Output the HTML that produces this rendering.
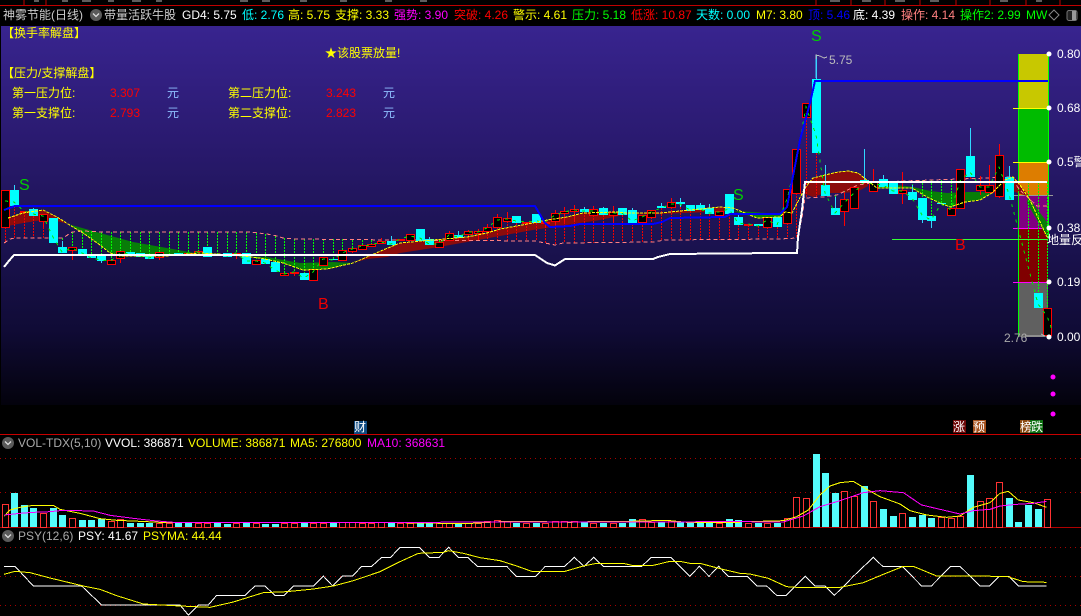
<!DOCTYPE html>
<html><head><meta charset="utf-8">
<style>
html,body{margin:0;padding:0;background:#000;width:1081px;height:616px;overflow:hidden}
svg{position:absolute;left:0;top:0;display:block}
text{font-family:"Liberation Sans","WenQuanYi Zen Hei","Noto Sans CJK SC",sans-serif;font-size:12px;white-space:pre}
.big{font-size:16px}
polyline{fill:none}
</style></head>
<body>
<svg id="c" width="1081" height="616" viewBox="0 0 1081 616" xmlns="http://www.w3.org/2000/svg">
<defs><linearGradient id="bg" x1="0" y1="0" x2="0" y2="1">
<stop offset="0" stop-color="#38248f"/><stop offset=".3" stop-color="#2a1a70"/><stop offset=".55" stop-color="#1c1353"/><stop offset=".8" stop-color="#100b36"/><stop offset="1" stop-color="#03020c"/></linearGradient></defs>
<rect width="1081" height="616" fill="#000"/>
<rect x="1" y="26" width="1080" height="379" fill="url(#bg)"/>
<g id="top" shape-rendering="crispEdges">
<rect x="0" y="5" width="1081" height="1" fill="#c00000"/>
<path d="M24 0V5M46 0V5M816 0V5M851 0V5M885 0V5M920 0V5M956 0V5M990 0V5M1026 0V5M1060 0V5" stroke="#c00000"/>
<path d="M34 1h5M62 1h6M82 1h9M108 1h6M132 1h9M156 1h6M240 1h8M262 1h8M300 1h7M340 1h7M385 1h7M420 1h7M830 1h10M862 1h9M895 1h10M930 1h9M1000 1h8M1036 1h6" stroke="#bbb"/>
</g>
<g id="bandg" shape-rendering="crispEdges">
<rect x="1018" y="54" width="30" height="54" fill="#c8c800"/>
<rect x="1018" y="108" width="30" height="54" fill="#00bb00"/>
<rect x="1018" y="162" width="30" height="33" fill="#dd7d00"/>
<rect x="1018" y="195" width="30" height="34" fill="#800080"/>
<rect x="1018" y="229" width="30" height="54" fill="#800000"/>
<rect x="1018" y="283" width="30" height="54" fill="#606060"/>
<path d="M1018.5 54V337M1048.5 54V239" stroke="#00ff00" fill="none"/>
<path d="M1013 108.500H1048M1013 162.500H1048" stroke="#ffff00"/>
<path d="M1013 195.500H1053" stroke="#999"/>
<path d="M1013 228.500H1047M1013 282.500H1047" stroke="#ff00ff"/>
</g>
<g id="rib">
<polygon fill="#8b0c0c" points="8,218 23,213 43,210 57,217 68,224 57,221 43,220 23,223 8,226"/>
<polygon fill="#087d08" points="68,224 83,233 100,245 110,253 120,256 133,256 167,256 200,253 233,255 260,258 283,263 303,270 327,269 353,263 333,262 300,263 267,257 233,256 200,254 167,248 133,242 100,233"/>
<polygon fill="#8b0c0c" points="353,263 367,257 383,250 400,243 433,240 467,237 487,233 500,229 533,223 547,220 567,217 583,213 617,212 627,213 660,213 680,211 700,209 720,207 733,208 733,211 660,214 623,215 600,220 567,225 533,230 500,236 467,242 433,248 400,253 387,257 367,259"/>
<polygon fill="#087d08" points="733,211 753,212 780,214 785,210 780,217 757,218"/>
<polygon fill="#8b0c0c" points="792,213 805,188 813,178 825,175 838,172 848,171 858,173 868,181 868,186 857,192 840,193 825,193 813,197 802,193"/>
<polygon fill="#087d08" points="868,183 877,188 897,188 912,188 927,197 940,203 950,207 965,202 980,200 992,193 980,192 967,192 947,193 930,191 913,187 897,185"/>
<polygon fill="#8b0c0c" points="992,193 1005,180 1013,177 1020,185 1030,197 1018,193 1005,188"/>
<polygon fill="#087d08" points="1028,197 1047,222 1047,237 1027,203"/>
</g>
<g id="chart"></g>
<g id="lines" shape-rendering="crispEdges">
<polyline stroke="#ffff00" stroke-dasharray="3 1" points="8,218 23,213 43,210 57,217 68,224 83,233 100,245 110,253 120,256 133,256 167,256 200,253 233,255 260,258 283,263 303,270 327,269 353,263 367,257 383,250 400,243 433,240 467,237 487,233 500,229 533,223 547,220 567,217 583,213 617,212 627,213 660,213 680,211 700,209 720,207 733,208 757,218 780,217 785,212 792,213 805,188 813,178 825,175 838,172 848,171 858,173 868,181 877,188 897,188 912,188 927,197 940,203 950,207 965,202 980,200 992,193 1005,180 1013,177 1020,185 1030,200 1047,237"/>
<polyline stroke="#fff" stroke-width="2" points="4,267 8,262 14,255 535,255 547,263 555,265.500 565,259 653,259 658,257 670,254 780,253 797,253 798,237 802,210 805,182 1047,182"/>
<polyline stroke="#0000ff" stroke-width="2" points="4,210 15,206 535,206 545,223 550,227 570,226 580,224 653,224 662,222 670,218 725,217 730,214 780,214 787,207 800,140 810,103 815,81 1048,81"/>
<path d="M892 239.500H1048" stroke="#33ff33"/>
<path d="M816 55V78" stroke="#40d0ff"/>
<polyline stroke="#bbb" points="816,59 816,55 820,56 824,58 827,57"/>
<polyline stroke="#bbb" points="1025,336 1045,336 1041,334"/>
</g>
<g fill="#fff">
<circle cx="1049" cy="54" r="2.500"/><circle cx="1049" cy="108" r="2.500"/><circle cx="1049" cy="162" r="2.500"/><circle cx="1049" cy="228" r="2.500"/><circle cx="1049" cy="282" r="2.500"/><circle cx="1049" cy="337" r="2.500"/>
</g>
<g fill="#ff00ff"><circle cx="1053" cy="377" r="2.500"/><circle cx="1053" cy="394" r="2.500"/><circle cx="1053" cy="414" r="2.500"/></g>
<g fill="#fff">
<text x="1057" y="58">0.80</text><text x="1057" y="112">0.68</text><text x="1057" y="166">0.5警</text><text x="1057" y="232">0.38</text><text x="1047" y="244">地量反</text><text x="1057" y="286">0.19</text><text x="1057" y="341">0.00</text>
</g>
<text x="1004" y="342" fill="#aaa">2.76</text>
<text x="829" y="64" fill="#bbb">5.75</text>
<g fill="#00d000"><text class="big" x="19" y="190">S</text><text class="big" x="811" y="41">S</text><text class="big" x="733" y="200">S</text></g>
<g fill="#ee0000"><text class="big" x="318" y="309">B</text><text class="big" x="955" y="250">B</text></g>
<!-- header -->
<rect x="0" y="26" width="1" height="380" fill="#000"/>
<text x="3" y="19" fill="#ccc">神雾节能(日线)</text>
<text x="104" y="19" fill="#ccc">带量活跃牛股</text>
<text x="182" y="19" fill="#fff">GD4: 5.75</text>
<text x="242" y="19" fill="#00ffff">低: 2.76</text>
<text x="288" y="19" fill="#ffff00">高: 5.75</text>
<text x="335" y="19" fill="#ffff00">支撑: 3.33</text>
<text x="394" y="19" fill="#ff00ff">强势: 3.90</text>
<text x="454" y="19" fill="#ff0000">突破: 4.26</text>
<text x="513" y="19" fill="#ffff00">警示: 4.61</text>
<text x="572" y="19" fill="#00ff00">压力: 5.18</text>
<text x="631" y="19" fill="#ff0000">低涨: 10.87</text>
<text x="696" y="19" fill="#00ffff">天数: 0.00</text>
<text x="756" y="19" fill="#ffff00">M7: 3.80</text>
<text x="808" y="19" fill="#0000ff">顶: 5.46</text>
<text x="853" y="19" fill="#fff">底: 4.39</text>
<text x="901" y="19" fill="#ff8080">操作: 4.14</text>
<text x="960" y="19" fill="#00ff00">操作2: 2.99</text>
<text x="1026" y="19" fill="#00ff00">MW</text>
<path d="M1054 10l5 5-5 5-5-5z" fill="none" stroke="#888"/>
<rect x="1067" y="10.500" width="10" height="10" rx="2" fill="#222" stroke="#777"/><rect x="1072" y="11" width="4" height="9" fill="#999"/>
<g id="ic">
<circle cx="96" cy="15" r="6" fill="#5a5a5a"/><path d="M93 13.500l3 3 3-3" fill="none" stroke="#ddd" stroke-width="1.300"/>
<circle cx="8" cy="443" r="6" fill="#5a5a5a"/><path d="M5 441.500l3 3 3-3" fill="none" stroke="#ddd" stroke-width="1.300"/>
<circle cx="8" cy="536" r="6" fill="#5a5a5a"/><path d="M5 534.500l3 3 3-3" fill="none" stroke="#ddd" stroke-width="1.300"/>
</g>
<!-- panel -->
<g fill="#ffff00">
<text x="2" y="37">【换手率解盘】</text>
<text x="325" y="57">★该股票放量!</text>
<text x="2" y="77">【压力/支撑解盘】</text>
<text x="12" y="97">第一压力位:</text><text x="228" y="97">第二压力位:</text>
<text x="12" y="117">第一支撑位:</text><text x="228" y="117">第二支撑位:</text>
</g>
<g fill="#ff0000"><text x="110" y="97">3.307</text><text x="326" y="97">3.243</text><text x="110" y="117">2.793</text><text x="326" y="117">2.823</text></g>
<g fill="#8fc0ff"><text x="167" y="97">元</text><text x="383" y="97">元</text><text x="167" y="117">元</text><text x="383" y="117">元</text></g>
<!-- tags -->
<g shape-rendering="crispEdges">
<rect x="354" y="421" width="13" height="13" fill="#0f4a80"/>
<rect x="953" y="420" width="13" height="13" fill="#6e0808"/>
<rect x="973" y="420" width="13" height="13" fill="#a4501c"/>
<rect x="1020" y="420" width="10" height="13" fill="#8a4a12"/>
<rect x="1030" y="420" width="13" height="13" fill="#0e7012"/>
</g>
<g fill="#fff"><text x="354" y="431">财</text><text x="953" y="431">涨</text><text x="973" y="431">预</text><text x="1020" y="431">榜</text><text x="1031" y="431">跌</text></g>
<!-- lower panes -->
<g shape-rendering="crispEdges">
<rect x="0" y="434" width="1081" height="1" fill="#c80000"/>
<rect x="0" y="527" width="1081" height="1" fill="#b00000"/>
<path d="M0 458.500H1081M0 492.500H1081M0 547.500H1081M0 576.500H1081M0 605.500H1081" stroke="#a80000" stroke-dasharray="1 4"/>
</g>
<g id="vol"></g>
<g id="vl" shape-rendering="crispEdges" stroke-width="3">
<g transform="translate(0,430) scale(.33333)">
<polyline stroke="#ffff00" points="13,258 30,240 60,232 100,226 160,226 180,238 240,250 300,266 350,271 420,274 480,277 1200,278"/>
<polyline stroke="#ff00ff" points="13,255 60,250 100,247 150,245 190,241 280,243 330,256 400,265 460,272 520,277 1200,278"/>
<polyline stroke="#fff" points="12,409 45,409 100,468 245,468 305,525 540,525 565,555 595,525 625,525 650,496 735,496 765,468 795,468 825,496 852,496 880,468 940,468 970,438 998,468 1028,438 1058,438 1085,409 1115,409 1145,382 1172,382 1200,352"/>
<polyline stroke="#ffff00" points="12,433 45,424 90,428 150,444 250,468 300,478 350,497 430,522 540,528 630,532 700,516 790,488 860,485 940,477 1000,468 1060,452 1140,425 1200,395"/>
</g>
<g transform="translate(400,430) scale(.33333)">
<polyline stroke="#ffff00" points="0,278 130,280 215,280 300,275 390,274 510,277 570,275 655,275 800,271 860,277 1020,277"/>
<polyline stroke="#ff00ff" points="0,277 1020,275"/>
<polyline stroke="#fff" points="0,352 58,352 88,382 117,382 146,352 175,382 203,382 232,409 320,409 349,439 407,439 436,409 494,409 523,382 552,409 581,382 610,409 725,409 754,382 812,382 869,439 898,409 927,439 956,409 985,439 1020,439"/>
<polyline stroke="#ffff00" points="0,395 55,370 130,367 146,362 190,370 240,383 300,392 350,408 395,424 495,424 550,408 590,400 670,400 700,407 760,406 810,394 840,394 870,400 900,400 960,416 1020,430"/>
</g>
<g transform="translate(740,430) scale(.33333)">
<polyline stroke="#ffff00" points="0,275 60,274 130,272 170,260 205,240 240,195 270,168 300,158 340,154 370,172 420,200 480,222 510,242 560,255 620,262 660,258 700,232 750,218 780,190 805,184 835,210 880,218 920,232"/>
<polyline stroke="#ff00ff" points="0,275 130,276 190,258 240,230 300,212 370,188 420,182 490,188 545,225 600,238 660,252 700,242 750,238 780,228 830,223 880,220 920,214"/>
<polyline stroke="#fff" points="0,439 22,439 51,468 80,468 110,496 138,496 196,439 225,468 255,468 283,496 312,468 340,439 400,382 428,409 487,409 545,468 574,468 632,409 660,409 720,468 748,468 777,439 806,439 835,468 920,468"/>
<polyline stroke="#ffff00" points="0,430 30,432 85,445 140,470 170,472 300,472 370,458 430,433 490,409 520,409 590,438 800,439 850,455 920,457"/>
</g>
</g>
<text x="18" y="447" fill="#aaa">VOL-TDX(5,10)</text>
<text x="105" y="447" fill="#fff">VVOL: 386871</text>
<text x="188" y="447" fill="#ffff00">VOLUME: 386871</text>
<text x="290" y="447" fill="#ffff00">MA5: 276800</text>
<text x="367" y="447" fill="#ff00ff">MA10: 368631</text>
<text x="18" y="540" fill="#aaa">PSY(12,6)</text>
<text x="78" y="540" fill="#fff">PSY: 41.67</text>
<text x="143" y="540" fill="#ffff00">PSYMA: 44.44</text>
</svg>
<script>
(function(){
var D=[[0,190,227,190,227],[1,190,206,185,206],[0,211,212,211,212],[1,209,216,208,216],[0,214,221,214,227],[1,218,243,218,243],[1,247,253,241,253],[0,247,250,247,260],[1,249,254,249,254],[1,256,258,254,258],[1,256,261,256,263],[0,260,264,260,264],[0,251,258,251,263],[1,252,255,252,255],[1,253,257,253,257],[1,256,259,256,259],[0,252,257,252,260],[1,254,255,254,255],[1,253,255,253,255],[0,253,254,253,254],[0,251,254,251,254],[1,247,257,247,257],[1,254,255,254,255],[1,253,257,253,257],[0,253,254,253,259],[1,253,264,253,264],[0,260,264,260,264],[1,259,264,259,264],[1,262,272,262,272],[0,273,275,273,275],[0,272,273,272,276],[1,273,280,273,280],[0,269,280,269,280],[0,257,265,257,265],[1,259,260,259,260],[0,250,260,250,260],[0,248,251,248,253],[0,245,249,245,249],[0,244,246,244,246],[0,241,243,238,243],[1,241,245,236,245],[0,239,240,239,240],[0,234,240,234,240],[1,229,241,229,241],[1,239,245,237,245],[0,242,247,242,247],[0,233,240,231,240],[1,235,238,231,238],[0,231,234,230,241],[0,231,233,229,240],[0,227,231,224,233],[0,217,227,214,227],[0,218,221,212,221],[1,216,223,216,223],[0,222,223,222,223],[1,214,223,214,223],[0,222,223,222,228],[0,213,221,210,226],[0,211,213,207,222],[0,209,211,205,222],[1,209,212,207,212],[0,209,215,206,215],[1,208,215,207,215],[0,212,215,206,225],[1,208,215,208,215],[1,210,224,208,224],[0,215,222,215,225],[0,210,217,210,217],[1,206,208,203,208],[0,202,207,198,207],[1,202,204,198,207],[1,205,211,205,211],[1,205,210,203,210],[1,208,214,204,214],[0,211,215,211,215],[1,194,214,194,214],[1,217,225,215,225],[0,224,225,224,225],[1,224,226,224,226],[0,217,227,217,227],[1,217,227,217,227],[0,189,223,189,223],[0,149,193,149,193],[0,103,117,103,117],[1,79,153,55,153],[1,185,196,165,196],[1,208,215,197,215],[0,199,211,192,226],[0,187,208,187,208],[1,180,182,149,182],[0,181,191,169,191],[1,179,187,175,187],[1,182,194,182,194],[0,190,193,172,204],[1,192,200,185,200],[1,198,220,198,223],[1,216,221,216,228],[1,203,204,203,204],[0,208,215,208,216],[0,169,208,169,208],[1,156,177,128,177],[0,185,190,176,195],[0,185,192,165,192],[0,155,196,144,198],[1,177,200,166,200],[1,200,200,200,200],[1,262,262,262,262],[1,293,308,293,308],[0,308,335,308,335]];
var V=[[0,222],[1,188],[1,225],[1,234],[0,250],[1,234],[1,255],[0,265],[1,270],[1,270],[1,267],[0,274],[0,268],[1,278],[1,278],[1,278],[0,278],[0,280],[1,278],[1,278],[0,280],[0,280],[1,280],[1,281],[0,280],[1,276],[0,280],[1,281],[1,281],[0,280],[0,280],[1,276],[0,278],[0,278],[1,278],[0,275],[0,275],[0,278],[0,278],[0,276],[1,278],[0,278],[0,278],[1,279],[1,279],[0,280],[0,280],[1,280],[0,280],[0,278],[0,273],[0,270],[0,272],[1,278],[0,278],[1,278],[0,278],[0,274],[0,274],[0,272],[1,275],[0,278],[1,278],[0,278],[1,278],[1,267],[0,268],[0,276],[1,275],[0,272],[1,275],[1,278],[1,278],[1,278],[0,278],[1,267],[1,270],[0,278],[1,278],[0,278],[1,278],[0,265],[0,202],[0,205],[1,72],[1,129],[1,189],[0,184],[0,198],[1,168],[0,214],[1,237],[1,258],[0,250],[1,261],[1,255],[1,264],[0,262],[0,265],[0,258],[1,135],[0,214],[0,205],[0,157],[1,204],[1,276],[1,225],[1,237],[0,208]];
var E=[[4,243],[10,239],[15,238],[63,238],[72,232],[83,231],[100,232],[250,232],[267,234],[277,236],[283,238],[297,239],[397,240],[535,241],[545,243],[555,245],[563,243],[653,242],[665,240],[780,239],[797,238],[802,218],[805,198],[823,197],[837,195],[858,185],[877,182],[987,178],[1010,177],[1020,190],[1037,206],[1047,206]];
function env(x){for(var i=1;i<E.length;i++){if(x<=E[i][0]){var a=E[i-1],b=E[i];var t=Math.max(0,(x-a[0])/(b[0]-a[0]));return a[1]+(b[1]-a[1])*t}}return E[E.length-1][1]}
function X(i){return 4.5+9.655*i}
var s='',gd='',rd='',cb='',cw='',rb='',rw='',g=[];
for(var i=0;i<D.length;i++){var d=D[i],x=X(i),rx=Math.round(x),e=env(x),t=d[1],b=d[2];
 if(i<106){ if(b<e-1) rd+='M'+(rx+.5)+' '+b+'V'+Math.round(e)+' '; else if(t>e+1) gd+='M'+(rx+.5)+' '+Math.round(e)+'V'+t+' ';}
 else { gd+='M'+(rx+.5)+' 182V'+t+' '; }
 if(i==105)continue; if(i==106)continue;
 if(d[0]){cb+='M'+(rx-4)+' '+t+'h9v'+Math.max(1,b-t)+'h-9z ';
  if(d[3]<t||d[4]>b)cw+='M'+(rx+.5)+' '+d[3]+'V'+d[4]+' ';}
 else{rb+='M'+(rx-4+.5)+' '+(t+.5)+'h8v'+Math.max(1,b-t)+'h-8z ';
  if(d[3]<t)rw+='M'+(rx+.5)+' '+d[3]+'V'+t+' ';
  if(d[4]>b)rw+='M'+(rx+.5)+' '+b+'V'+d[4]+' ';}
 g.push(rx+','+(d[0]?Math.round(b-(b-t)*.25):Math.round(t+(b-t)*.3)));
}
g.push('1052,330');
s+='<path shape-rendering="crispEdges" d="'+rd+'" stroke="#f00000" stroke-dasharray="2 1" fill="none"/>';
s+='<path shape-rendering="crispEdges" d="'+gd+'" stroke="#00ff00" stroke-dasharray="2 1" fill="none"/>';
var ep=E.map(function(p){return p.join(',')}).join(' ');
s+='<polyline shape-rendering="crispEdges" points="'+ep+'" stroke="#ff8080" stroke-dasharray="4 3"/>';
s+='<path shape-rendering="crispEdges" d="'+rw+'" stroke="#ff0000" fill="none"/>';
s+='<path shape-rendering="crispEdges" d="'+cw+'" stroke="#30d8ff" fill="none"/>';
s+='<path shape-rendering="crispEdges" d="'+cb+'" fill="#00ffff"/>';
s+='<path shape-rendering="crispEdges" d="'+rb+'" fill="#000" stroke="#ff0000"/>';
s+='<polyline shape-rendering="crispEdges" points="'+g.join(' ')+'" stroke="#00e800" stroke-dasharray="3 5"/>';
document.getElementById('chart').innerHTML=s;
var c='',r='';
for(var j=0;j<V.length;j++){var v=V[j],vx=Math.round(X(j)),y=Math.round(430+v[1]/3);
 if(v[0])c+='M'+(vx-3)+' '+y+'h7V527h-7z ';else r+='M'+(vx-3+.5)+' '+(y+.5)+'h6V527.5h-6z ';}
document.getElementById('vol').innerHTML='<path shape-rendering="crispEdges" d="'+c+'" fill="#54fcfc"/><path shape-rendering="crispEdges" d="'+r+'" fill="#000" stroke="#ff3232"/>';
})();
</script>
</body></html>
